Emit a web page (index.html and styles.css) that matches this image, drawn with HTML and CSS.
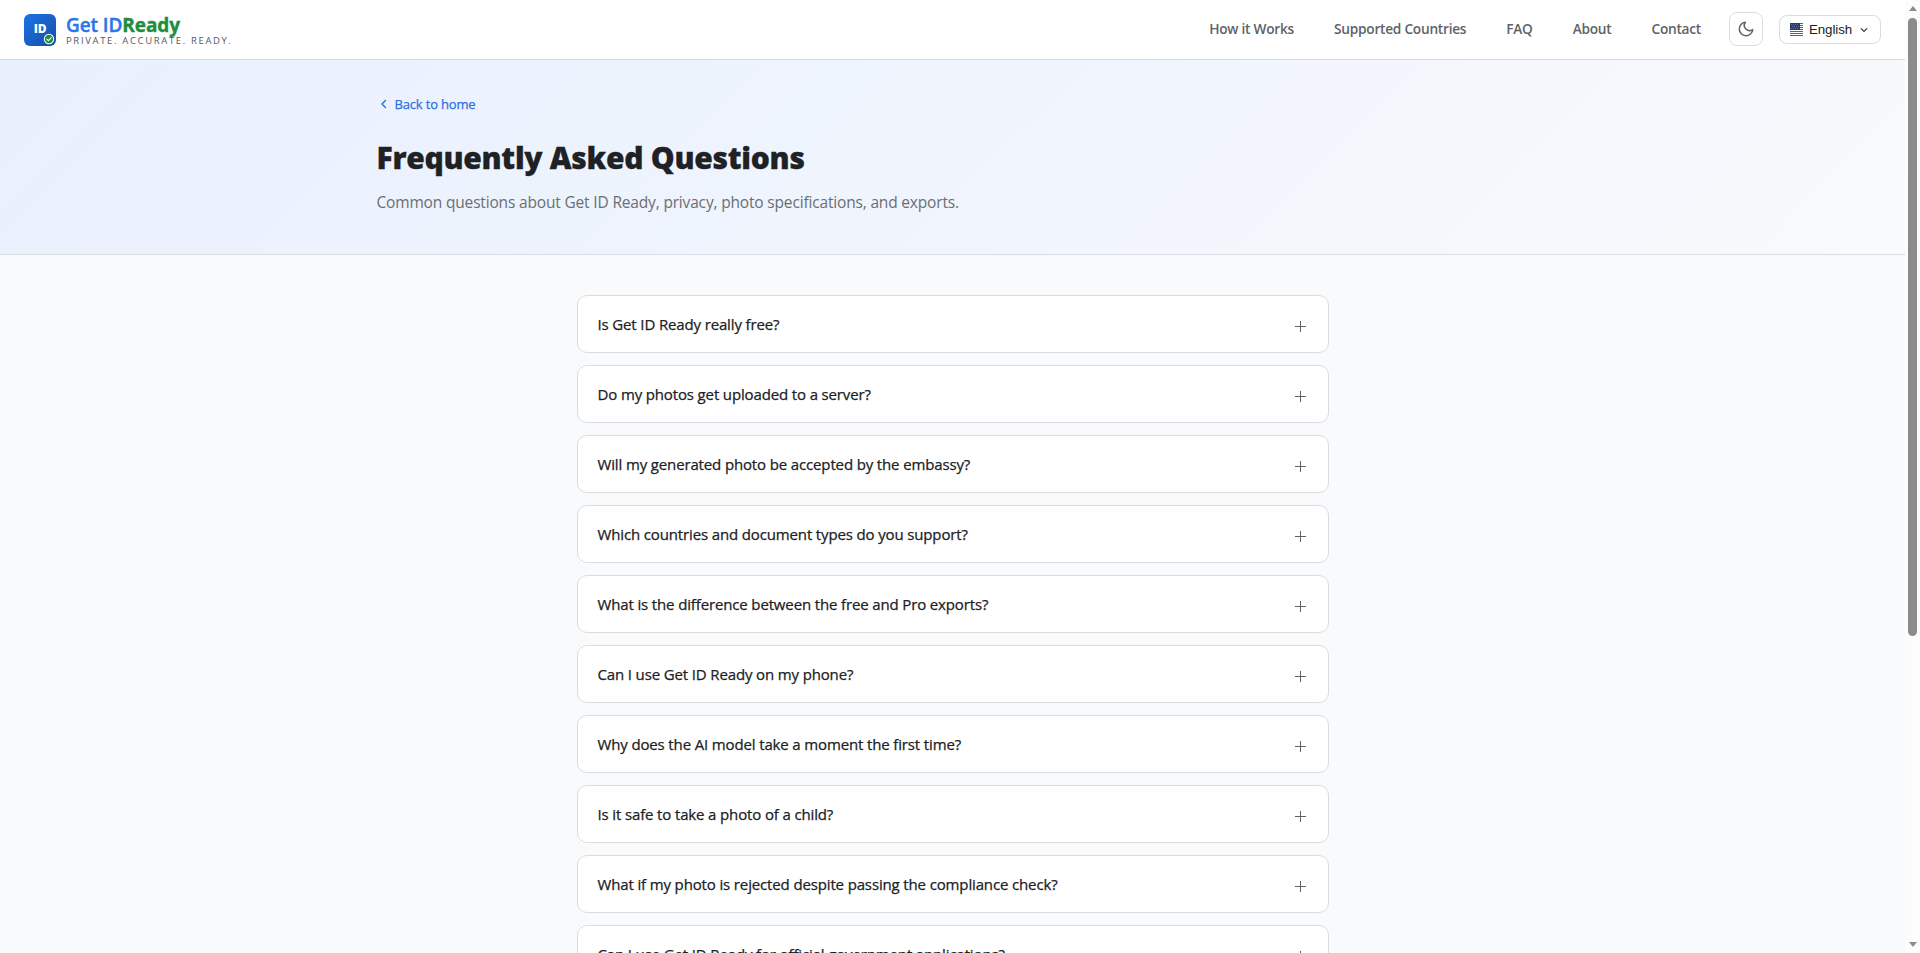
FILE: index.html
```
<!DOCTYPE html>
<html lang="en">
<head>
    <meta charset="UTF-8">
    <title>FAQ - Get ID Ready</title>
    <link rel="stylesheet" href="styles.css">
</head>
<body>
    <div class="page">
        <header class="header">
            <a class="logo" href="#">
                <svg class="logo-mark" width="32" height="32" viewBox="0 0 32 32">
                    <defs>
                        <linearGradient id="logo-bg" x1="0" y1="0" x2="1" y2="1">
                            <stop offset="0" stop-color="#1a73e8"/>
                            <stop offset="1" stop-color="#174ea6"/>
                        </linearGradient>
                    </defs>
                    <rect width="32" height="32" rx="6" fill="url(#logo-bg)"/>
                    <text class="logo-id" x="16" y="18.7" text-anchor="middle">ID</text>
                    <circle cx="25" cy="25" r="5.2" fill="#fff"/>
                    <circle cx="25" cy="25" r="4.2" fill="#1e8e3e"/>
                    <path d="M22.8 25.2l1.6 1.5 2.9-3.1" fill="none" stroke="#fff" stroke-width="1.1" stroke-linecap="round" stroke-linejoin="round"/>
                </svg>
                <span class="logo-text">
                    <span class="logo-name">Get ID<b>Ready</b></span>
                    <span class="logo-tagline">PRIVATE. ACCURATE. READY.</span>
                </span>
            </a>
            <nav class="nav">
                <a href="#">How it Works</a>
                <a href="#">Supported Countries</a>
                <a href="#">FAQ</a>
                <a href="#">About</a>
                <a href="#">Contact</a>
            </nav>
            <button class="theme-toggle" aria-label="Toggle theme">
                <svg width="18" height="18" viewBox="0 0 24 24" fill="none" stroke="#5f6368" stroke-width="2" stroke-linecap="round" stroke-linejoin="round">
                    <path d="M21 12.79A9 9 0 1 1 11.21 3 7 7 0 0 0 21 12.79z"/>
                </svg>
            </button>
            <button class="lang-button">
                <svg width="13" height="13" viewBox="0 0 13 13">
                    <rect width="13" height="13" fill="#fff"/>
                    <path d="M0 .5h13M0 2.5h13M0 4.5h13M0 6.5h13M0 8.5h13M0 10.5h13M0 12.5h13" stroke="#b83a4b"/>
                    <rect width="10" height="7" fill="#263b6e"/>
                    <path d="M1 1.5h8M2 3.5h7M1 5.5h8" stroke="#7183a8" stroke-width=".7" stroke-dasharray="1 1"/>
                </svg>
                <span class="lang-name">English</span>
                <svg width="10" height="10" viewBox="0 0 10 10" fill="none" stroke="#3c4043" stroke-width="1.3" stroke-linecap="round" stroke-linejoin="round">
                    <path d="M2.2 3.6L5 6.4l2.8-2.8"/>
                </svg>
            </button>
        </header>

        <section class="hero">
            <div class="hero-inner">
                <a class="back-link" href="#">
                    <svg width="14" height="14" viewBox="0 0 24 24" fill="none" stroke="currentColor" stroke-width="2.5" stroke-linecap="round" stroke-linejoin="round">
                        <path d="M14.5 18l-6-6 6-6"/>
                    </svg>
                    <span>Back to home</span>
                </a>
                <h1>Frequently Asked Questions</h1>
                <p>Common questions about Get ID Ready, privacy, photo specifications, and exports.</p>
            </div>
        </section>

        <main class="faq-list">
            <div class="faq-item"><span>Is Get ID Ready really free?</span><i class="plus"></i></div>
            <div class="faq-item"><span>Do my photos get uploaded to a server?</span><i class="plus"></i></div>
            <div class="faq-item"><span>Will my generated photo be accepted by the embassy?</span><i class="plus"></i></div>
            <div class="faq-item"><span>Which countries and document types do you support?</span><i class="plus"></i></div>
            <div class="faq-item"><span>What is the difference between the free and Pro exports?</span><i class="plus"></i></div>
            <div class="faq-item"><span>Can I use Get ID Ready on my phone?</span><i class="plus"></i></div>
            <div class="faq-item"><span>Why does the AI model take a moment the first time?</span><i class="plus"></i></div>
            <div class="faq-item"><span>Is it safe to take a photo of a child?</span><i class="plus"></i></div>
            <div class="faq-item"><span>What if my photo is rejected despite passing the compliance check?</span><i class="plus"></i></div>
            <div class="faq-item"><span>Can I use Get ID Ready for official government applications?</span><i class="plus"></i></div>
        </main>
    </div>

    <div class="scrollbar">
        <span class="arrow-up"></span>
        <span class="thumb"></span>
        <span class="arrow-down"></span>
    </div>
</body>
</html>
```
FILE: styles.css
```
* {
    box-sizing: border-box;
}
body {
    margin: 0;
    height: 953px;
    display: flex;
    overflow: hidden;
    font-family: "Open Sans", "Noto Sans", sans-serif;
    color: #202124;
    background: #f8fafc;
}
a {
    text-decoration: none;
    color: inherit;
}
button {
    background: #fff;
    border: 1px solid #dadce0;
    padding: 0;
    display: flex;
    align-items: center;
    cursor: pointer;
}
.page {
    flex: 1;
    height: 953px;
    overflow: hidden;
}

/* header */
.header {
    height: 60px;
    padding: 0 24px;
    display: flex;
    align-items: center;
    background: #fff;
    border-bottom: 1px solid #dadce0;
}
.logo {
    display: flex;
    align-items: center;
    gap: 10px;
    margin-right: auto;
}
.logo-mark {
    display: block;
}
.logo-id {
    font-size: 12px;
    font-weight: 800;
    fill: #fff;
    letter-spacing: -0.3px;
}
.logo-text {
    display: flex;
    flex-direction: column;
    padding-top: 1px;
}
.logo-name {
    font-size: 19px;
    font-weight: 600;
    line-height: 20px;
    letter-spacing: -0.1px;
    color: #2b76e8;
    white-space: nowrap;
    -webkit-text-stroke: 0.4px;
}
.logo-name b {
    font-weight: 700;
    color: #1e8e3e;
}
.logo-tagline {
    margin-top: 1px;
    font-size: 9.5px;
    line-height: 10px;
    letter-spacing: 1.65px;
    color: #55595e;
    white-space: nowrap;
}
.nav {
    display: flex;
    gap: 40px;
    margin: 0 28px 1px 0;
    font-size: 13.7px;
    font-weight: 600;
    line-height: 20px;
    letter-spacing: -0.25px;
    color: #5f6368;
    white-space: nowrap;
}
.theme-toggle {
    width: 34px;
    height: 34px;
    margin: 0 16px 1px 0;
    justify-content: center;
    border-radius: 8px;
}
.lang-button {
    width: 102px;
    height: 29px;
    padding-left: 10px;
    border-radius: 8px;
}
.lang-name {
    margin: 0 7px 0 6px;
    font: 13.33px "Liberation Sans", Arial, sans-serif;
    letter-spacing: -0.1px;
    color: #202124;
}

/* hero */
.hero {
    height: 195px;
    background: linear-gradient(135deg, #e8f0fe 0%, #f8fafc 100%);
    border-bottom: 1px solid #dadce0;
}
.hero-inner {
    width: 1152px;
    margin: 0 auto;
    padding-top: 34px;
}
.back-link {
    display: flex;
    align-items: center;
    gap: 4px;
    height: 20px;
    font-size: 13px;
    font-weight: 500;
    letter-spacing: -0.17px;
    color: #2f6fe4;
    -webkit-text-stroke: 0.25px;
}
.hero h1 {
    margin: 22px 0 0;
    font-size: 30px;
    font-weight: 800;
    line-height: 44px;
    letter-spacing: -0.28px;
    -webkit-text-stroke: 0.3px;
}
.hero p {
    margin: 10px 0 0;
    font-size: 15.5px;
    font-weight: 400;
    line-height: 24px;
    letter-spacing: -0.17px;
    color: #6a6e73;
}

/* questions */
.faq-list {
    width: 752px;
    margin: 40px auto 0;
    display: flex;
    flex-direction: column;
    gap: 12px;
}
.faq-item {
    height: 58px;
    padding: 0 22px 0 20px;
    display: flex;
    align-items: center;
    justify-content: space-between;
    background: #fff;
    border: 1px solid #dadce0;
    border-radius: 10px;
    font-size: 15px;
    font-weight: 500;
    letter-spacing: -0.14px;
    -webkit-text-stroke: 0.25px;
}
.plus {
    width: 11px;
    height: 11px;
    margin-top: 4px;
    background:
        linear-gradient(#5f6368, #5f6368) center / 11px 1px no-repeat,
        linear-gradient(#5f6368, #5f6368) center / 1px 11px no-repeat;
}

/* scrollbar */
.scrollbar {
    width: 15px;
    height: 953px;
    padding: 6px 0;
    display: flex;
    flex-direction: column;
    align-items: center;
    background: #fcfcfc;
}
.thumb {
    width: 9px;
    height: 618px;
    margin: 7px 0 auto;
    border-radius: 5px;
    background: #8b8b8b;
}
.arrow-up,
.arrow-down {
    border: 4.5px solid transparent;
}
.arrow-up {
    border-top: 0;
    border-bottom: 5px solid #8b8b8b;
}
.arrow-down {
    border-bottom: 0;
    border-top: 5px solid #8b8b8b;
}
```
